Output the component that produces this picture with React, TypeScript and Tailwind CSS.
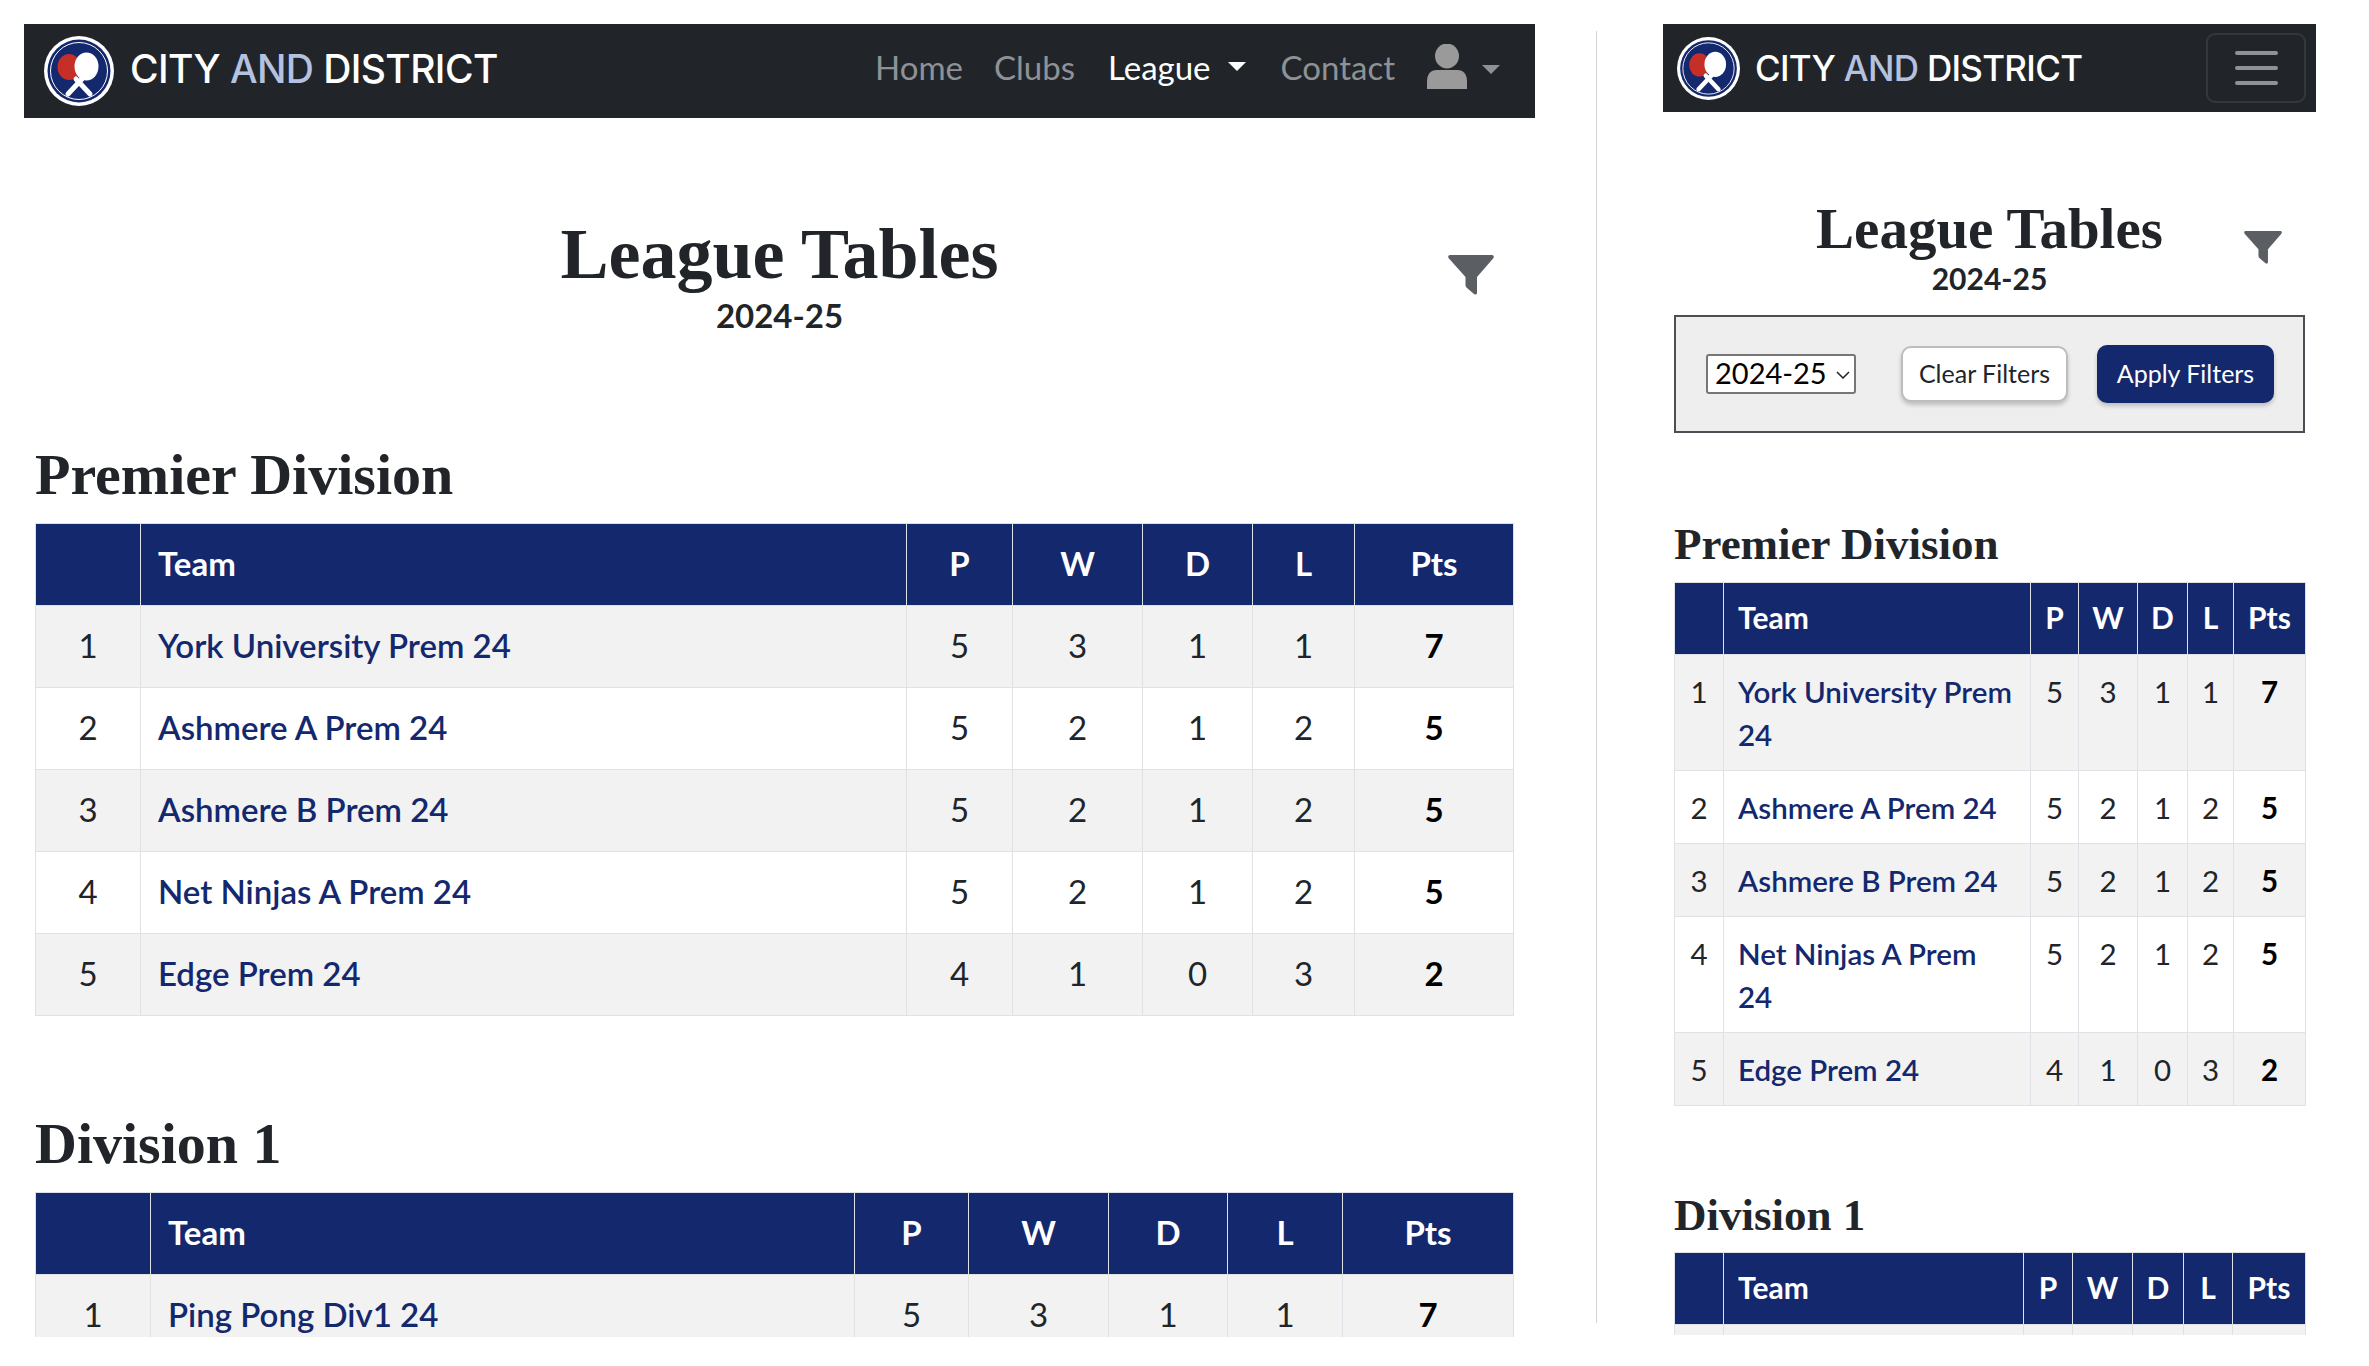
const SANS = "font-['Lato','Liberation_Sans',sans-serif]";

type Row = [number, string, number, number, number, number, number];

const premier: Row[] = [
  [1, "York University Prem 24", 5, 3, 1, 1, 7],
  [2, "Ashmere A Prem 24", 5, 2, 1, 2, 5],
  [3, "Ashmere B Prem 24", 5, 2, 1, 2, 5],
  [4, "Net Ninjas A Prem 24", 5, 2, 1, 2, 5],
  [5, "Edge Prem 24", 4, 1, 0, 3, 2],
];
const divisionOne: Row[] = [[1, "Ping Pong Div1 24", 5, 3, 1, 1, 7]];

function Logo({ className }: { className: string }) {
  return (
    <svg viewBox="0 0 70 70" className={className}>
      <circle cx="35" cy="35" r="35" fill="#fff" />
      <circle cx="35" cy="35" r="31.5" fill="#14286e" />
      <circle cx="35" cy="35" r="28.5" fill="none" stroke="#fff" strokeWidth="1" />
      <ellipse cx="25" cy="31" rx="11.5" ry="13" fill="#c62f27" />
      <path d="M32 43 L46 58" stroke="#fff" strokeWidth="5" strokeLinecap="round" />
      <path d="M38 43 L24 58" stroke="#fff" strokeWidth="5" strokeLinecap="round" />
      <ellipse cx="42.5" cy="30.5" rx="12" ry="14" fill="#fff" />
    </svg>
  );
}

function Funnel({ className }: { className: string }) {
  return (
    <svg viewBox="0 0 46 40" className={className}>
      <path
        d="M2 0 H44 Q46.500 0 45.500 3 L29 22 V38 Q28.500 40.500 26 39 L19 33 Q17.500 32 17.500 30 V22 L0.500 3 Q-0.500 0 2 0 Z"
        fill="#5b5e62"
      />
    </svg>
  );
}

function Caret({ color }: { color: string }) {
  return (
    <span
      className={`inline-block w-0 h-0 border-x-[9px] border-x-transparent border-t-[9px] ${color}`}
    />
  );
}

function Brand({ logo, text }: { logo: string; text: string }) {
  return (
    <div className="flex items-center">
      <Logo className={logo} />
      <span className={`text-white font-medium font-['Inter',sans-serif] ${text}`}>
        CITY <span className="text-[#b4c2e0]">AND</span> DISTRICT
      </span>
    </div>
  );
}

function LeagueTable({
  rows,
  widths,
  headClass,
  cellClass,
  teamClass,
}: {
  rows: Row[];
  widths: number[];
  headClass: string;
  cellClass: string;
  teamClass: string;
}) {
  const heads = ["", "Team", "P", "W", "D", "L", "Pts"];
  return (
    <table className="table-fixed border-collapse w-full">
      <colgroup>
        {widths.map((w, i) => (
          <col key={i} style={{ width: w }} />
        ))}
      </colgroup>
      <thead>
        <tr className={`bg-[#14286e] text-white ${headClass}`}>
          {heads.map((h, i) => (
            <th
              key={i}
              className={`border border-[#dee2e6] font-bold pb-[3px] ${i === 1 ? `text-left ${teamClass}` : "text-center"}`}
            >
              {h}
            </th>
          ))}
        </tr>
      </thead>
      <tbody>
        {rows.map((r, i) => (
          <tr key={r[0]} className={i % 2 === 0 ? "bg-[#f2f2f2]" : "bg-white"}>
            {r.map((v, j) => (
              <td
                key={j}
                className={`border border-[#dee2e6] align-top ${cellClass} ${
                  j === 1 ? `text-left text-[#14286e] font-semibold ${teamClass}` : "text-center text-[#212529]"
                } ${j === 6 ? "font-bold text-black" : ""}`}
              >
                {v}
              </td>
            ))}
          </tr>
        ))}
      </tbody>
    </table>
  );
}

function LeftPane() {
  return (
    <div className="w-[1511px] h-[1313px] mt-6 ml-6 shrink-0 overflow-hidden">
      <nav className="h-[94px] bg-[#212529] flex items-center justify-between pl-5 pr-[35px]">
        <Brand logo="w-[70px] h-[70px] mr-4" text="text-[39px] tracking-[-0.6px] leading-none -mt-[5px]" />
        <div className="flex items-center text-[33px] text-[#8f9295] pb-[6px]">
          <span className="mr-[31px]">Home</span>
          <span className="mr-[33px]">Clubs</span>
          <span className="text-white mr-[17px]">League</span>
          <span className="mr-[35px] -mt-1 flex"><Caret color="border-t-white" /></span>
          <span className="mr-8">Contact</span>
          <svg viewBox="0 0 40 45" className="w-10 h-[45px] mr-[15px] -mt-[3px]">
            <ellipse cx="20" cy="12" rx="12" ry="12.500" fill="#9a9a9a" />
            <path d="M0 45 V38 Q0 26 10 26 H30 Q40 26 40 38 V45 Z" fill="#9a9a9a" />
          </svg>
          <span className="mt-[3px] flex"><Caret color="border-t-[#8f9295]" /></span>
        </div>
      </nav>
      <div className="grid grid-cols-[1fr_auto_1fr] mt-[94px] px-[41px]">
        <div />
        <div className="text-center">
          <h1 className="font-['Liberation_Serif',serif] font-bold text-[72px] leading-[84px] text-[#212529]">League Tables</h1>
          <p className="text-[33px] leading-[38px] font-bold text-[#212529]">2024-25</p>
        </div>
        <div className="justify-self-end pt-[43px]">
          <Funnel className="w-[46px] h-10" />
        </div>
      </div>
      <div className="pl-[11px] pr-[22px]">
        <h2 className="font-['Liberation_Serif',serif] font-bold text-[58px] leading-[64px] text-[#212529] mt-[109px] mb-[16px]">Premier Division</h2>
        <LeagueTable
          rows={premier}
          widths={[105, 766, 106, 130, 110, 102, 159]}
          headClass="text-[33px] leading-[48px] h-[82px]"
          cellClass="text-[33px] leading-[48px] pt-[15px] pb-[18px]"
          teamClass="pl-[17px]"
        />
        <h2 className="font-['Liberation_Serif',serif] font-bold text-[58px] leading-[64px] text-[#212529] mt-[96px] mb-[16px]">Division 1</h2>
        <LeagueTable
          rows={divisionOne}
          widths={[115, 704, 114, 140, 119, 115, 171]}
          headClass="text-[33px] leading-[48px] h-[82px]"
          cellClass="text-[33px] leading-[48px] pt-[15px] pb-[18px]"
          teamClass="pl-[17px]"
        />
      </div>
    </div>
  );
}

function RightPane() {
  return (
    <div className="w-[653px] h-[1311px] mt-6 ml-[66px] shrink-0 overflow-hidden">
      <nav className="h-[88px] bg-[#212529] flex items-center justify-between pl-[14px] pr-[10px]">
        <Brand logo="w-[63px] h-[63px] mr-[15px]" text="text-[35px] tracking-[-0.7px] leading-none" />
        <div className="w-[100px] h-[70px] rounded-[9px] border-2 border-[#34383c] flex flex-col items-center justify-center gap-[11px]">
          <span className="w-[43px] h-1 bg-[#8f9295] rounded-sm" />
          <span className="w-[43px] h-1 bg-[#8f9295] rounded-sm" />
          <span className="w-[43px] h-1 bg-[#8f9295] rounded-sm" />
        </div>
      </nav>
      <div className="grid grid-cols-[1fr_auto_1fr] mt-[86px] px-[34px]">
        <div />
        <div className="text-center">
          <h1 className="font-['Liberation_Serif',serif] font-bold text-[57px] leading-[62px] text-[#212529]">League Tables</h1>
          <p className="text-[30px] leading-[37px] font-bold text-[#212529]">2024-25</p>
        </div>
        <div className="justify-self-end pt-[33px]">
          <Funnel className="w-[38px] h-[33px]" />
        </div>
      </div>
      <div className="px-[11px]">
        <div className="mt-[18px] h-[118px] bg-[#eeeeee] border-2 border-[#4b4f53] flex items-center pl-[30px]">
          <div className="relative w-[150px] h-10 mr-[45px]">
            <select className="appearance-none w-full h-full bg-white border-2 border-[#767676] rounded-[3px] text-[29px] leading-none text-black pl-[7px] pb-1">
              <option>2024-25</option>
            </select>
            <svg viewBox="0 0 14 8" className="absolute right-[6px] top-[17px] w-[14px] h-2" fill="none" stroke="#222" strokeWidth="1.500">
              <path d="M1 1 L7 7 L13 1" />
            </svg>
          </div>
          <button className="w-[167px] h-14 bg-white border-2 border-[#bdbdbd] rounded-[10px] text-[25px] text-[#212529] shadow-[0_3px_4px_rgba(0,0,0,0.2)] mr-[29px]">Clear Filters</button>
          <button className="w-[177px] h-[58px] bg-[#14286e] rounded-[10px] text-[25px] text-white shadow-[0_3px_4px_rgba(0,0,0,0.2)]">Apply Filters</button>
        </div>
        <h2 className="font-['Liberation_Serif',serif] font-bold text-[45px] leading-[50px] text-[#212529] mt-[86px] mb-[13px]">Premier Division</h2>
        <LeagueTable
          rows={premier}
          widths={[49, 307, 48, 59, 50, 46, 72]}
          headClass="text-[30px] leading-[43px] h-[72px]"
          cellClass="text-[29.5px] leading-[43px] py-[14.5px]"
          teamClass="pl-[14px] pr-[15px]"
        />
        <h2 className="font-['Liberation_Serif',serif] font-bold text-[45px] leading-[50px] text-[#212529] mt-[84px] mb-[12px]">Division 1</h2>
        <LeagueTable
          rows={divisionOne}
          widths={[49, 300, 49, 60, 51, 49, 73]}
          headClass="text-[30px] leading-[43px] h-[72px]"
          cellClass="text-[29.5px] leading-[43px] py-[14.5px]"
          teamClass="pl-[14px] pr-[15px]"
        />
      </div>
    </div>
  );
}

export default function App() {
  return (
    <div className={`w-[2369px] h-[1366px] bg-white flex overflow-hidden ${SANS}`}>
      <LeftPane />
      <div className="w-px h-[1292px] mt-[31px] ml-[61px] bg-[#d4d4d4] shrink-0" />
      <RightPane />
    </div>
  );
}
